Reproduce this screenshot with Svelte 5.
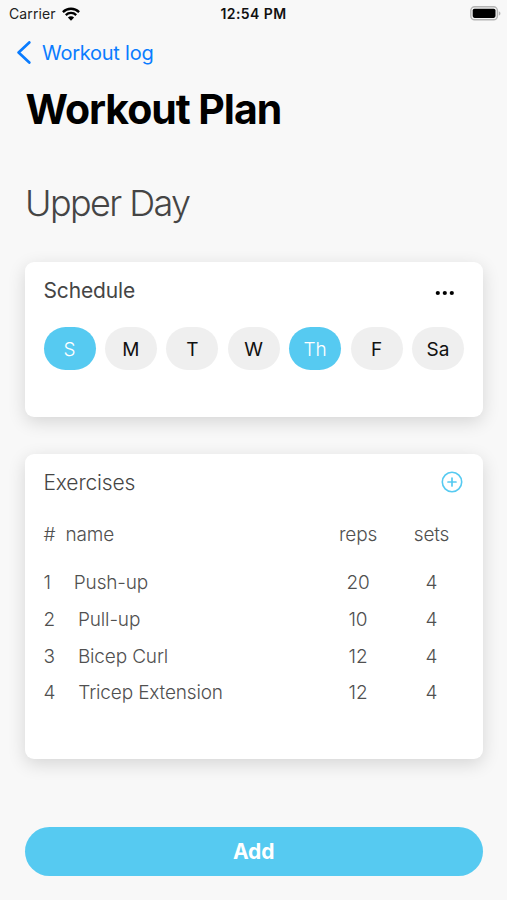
<script>
  let days = $state([
    { label: 'S', active: true },
    { label: 'M', active: false },
    { label: 'T', active: false },
    { label: 'W', active: false },
    { label: 'Th', active: true },
    { label: 'F', active: false },
    { label: 'Sa', active: false }
  ]);

  const exercises = [
    { name: 'Push-up', reps: 20, sets: 4 },
    { name: 'Pull-up', reps: 10, sets: 4 },
    { name: 'Bicep Curl', reps: 12, sets: 4 },
    { name: 'Tricep Extension', reps: 12, sets: 4 }
  ];

  function toggleDay(day) {
    day.active = !day.active;
  }
</script>

<div class="screen">
  <!-- Status bar -->
  <div class="status-bar">
    <div class="carrier">
      <span>Carrier</span>
      <svg width="18" height="14" viewBox="0 0 18 14" fill="none" stroke="#000" stroke-width="2.3">
        <path d="M0.9 5.1a11.5 11.5 0 0 1 16.2 0" />
        <path d="M3.8 8.1a7.4 7.4 0 0 1 10.4 0" />
        <path d="M9 13.7L5.9 10.5a4.4 4.4 0 0 1 6.2 0z" fill="#000" stroke="none" />
      </svg>
    </div>
    <span class="time">12:54 PM</span>
    <svg class="battery" width="31" height="15" viewBox="0 0 31 15">
      <rect x="0.8" y="0.8" width="26.6" height="13" rx="3.8" fill="#f4f4f4" stroke="#b4b4b4" stroke-width="1.4" />
      <rect x="2.7" y="2.7" width="22.8" height="9.2" rx="1.8" fill="#000" />
      <path d="M28.8 5.2c2.2 0.8 2.2 3.6 0 4.4z" fill="#b4b4b4" />
    </svg>
  </div>

  <button class="back">
    <svg width="15" height="24" viewBox="0 0 15 24" fill="none" stroke="#0a7cff" stroke-width="2.7" stroke-linecap="round" stroke-linejoin="round">
      <path d="M12.3 1.4L1.6 11.5l10.7 10.1" />
    </svg>
    <span>Workout log</span>
  </button>

  <h1>Workout Plan</h1>
  <h2>Upper Day</h2>

  <section class="card schedule">
    <div class="card-header">
      <h3 class="schedule-title">Schedule</h3>
      <button class="more" aria-label="More">
        <svg width="20" height="6" viewBox="0 0 20 6" fill="#000">
          <circle cx="2.8" cy="3" r="2.1" />
          <circle cx="9.8" cy="3" r="2.1" />
          <circle cx="16.8" cy="3" r="2.1" />
        </svg>
      </button>
    </div>
    <div class="days">
      {#each days as day}
        <button class="day" class:active={day.active} onclick={() => toggleDay(day)}>{day.label}</button>
      {/each}
    </div>
  </section>

  <section class="card exercises">
    <div class="card-header">
      <h3>Exercises</h3>
      <button class="plus" aria-label="Add exercise">
        <svg width="22" height="22" viewBox="0 0 22 22" fill="none" stroke="#56caf1" stroke-linecap="round">
          <circle cx="11" cy="11" r="9.7" stroke-width="1.6" />
          <path d="M11 7v8M7 11h8" stroke-width="1.7" />
        </svg>
      </button>
    </div>
    <div class="row head">
      <span class="label"><span class="num">#</span><span class="name-head">name</span></span>
      <span class="reps">reps</span>
      <span class="sets">sets</span>
    </div>
    {#each exercises as exercise, i}
      <div class="row">
        <span class="label"><span class="num">{i + 1}</span><span class="name">{exercise.name}</span></span>
        <span class="reps">{exercise.reps}</span>
        <span class="sets">{exercise.sets}</span>
      </div>
    {/each}
  </section>

  <button class="add">Add</button>
</div>

<style>
  :global(body) {
    margin: 0;
    background: #f8f8f8;
  }

  .screen {
    box-sizing: border-box;
    width: 507px;
    height: 900px;
    display: flex;
    flex-direction: column;
    background: #f8f8f8;
    font-family: Inter, "Liberation Sans", sans-serif;
    color: #454545;
    overflow: hidden;
  }

  button {
    padding: 0;
    border: 0;
    background: none;
    font: inherit;
    cursor: pointer;
  }

  svg {
    display: block;
  }

  h1, h2, h3 {
    margin: 0;
  }

  /* Status bar */
  .status-bar {
    display: grid;
    grid-template-columns: 1fr auto 1fr;
    align-items: center;
    height: 27px;
    padding: 0 6px;
    font-size: 14px;
    color: #222;
  }

  .carrier {
    display: flex;
    align-items: center;
    gap: 6px;
    padding-left: 3px;
    letter-spacing: 0.1px;
  }

  .time {
    font-weight: 600;
    color: #111;
    letter-spacing: 0.4px;
  }

  .battery {
    justify-self: end;
  }

  .back {
    display: flex;
    align-items: center;
    align-self: flex-start;
    gap: 10px;
    height: 50px;
    margin-left: 17px;
    padding-top: 1px;
    box-sizing: border-box;
    font-size: 20px;
    letter-spacing: -0.25px;
    color: #0a7cff;
  }

  h1 {
    margin: 7px 0 0 25.5px;
    font-size: 41px;
    line-height: 50px;
    font-weight: 700;
    letter-spacing: -1.05px;
    color: #000;
  }

  h2 {
    margin: 44px 0 0 25px;
    font-size: 36px;
    line-height: 50px;
    font-weight: 300;
    letter-spacing: -1.6px;
  }

  /* Cards */
  .card {
    box-sizing: border-box;
    margin: 0 24.5px 0 25px;
    padding: 0 18.5px;
    border-radius: 9px;
    background: #fff;
    box-shadow: 0 5px 18px rgba(0, 0, 0, 0.14);
  }

  .card-header {
    display: flex;
    align-items: center;
    justify-content: space-between;
    height: 56px;
  }

  h3 {
    font-size: 21px;
    font-weight: 350;
    letter-spacing: -0.15px;
  }

  .schedule-title {
    font-weight: 400;
  }

  .schedule {
    height: 155px;
    margin-top: 34px;
  }

  .more {
    margin: 5px 9px 0 0;
  }

  .days {
    display: flex;
    justify-content: space-between;
    margin-top: 9.4px;
  }

  .day {
    width: 52px;
    height: 43px;
    padding-top: 1px;
    border-radius: 21.5px;
    background: #efefef;
    font-size: 19px;
    color: #111;
  }

  .day.active {
    background: #56caf1;
    color: #fff;
    font-weight: 350;
  }

  .exercises {
    height: 305px;
    margin-top: 37px;
  }

  .plus {
    margin-right: 1.5px;
  }

  .row {
    display: grid;
    grid-template-columns: 1fr 74px 73px;
    align-items: center;
    height: 36.7px;
    margin-right: -4px;
    font-size: 19px;
    font-weight: 350;
    letter-spacing: -0.15px;
    color: #505050;
  }

  .row.head {
    margin-top: 6px;
    margin-bottom: 11.6px;
  }

  .label {
    display: flex;
  }

  .name-head {
    margin-left: 10px;
  }

  .name {
    margin-left: 23px;
  }

  .reps,
  .sets {
    text-align: center;
  }

  .add {
    height: 48.5px;
    margin: 68px 24.5px 0 25px;
    border-radius: 24.5px;
    background: #56caf1;
    font-size: 21px;
    font-weight: 700;
    color: #fff;
  }
</style>
